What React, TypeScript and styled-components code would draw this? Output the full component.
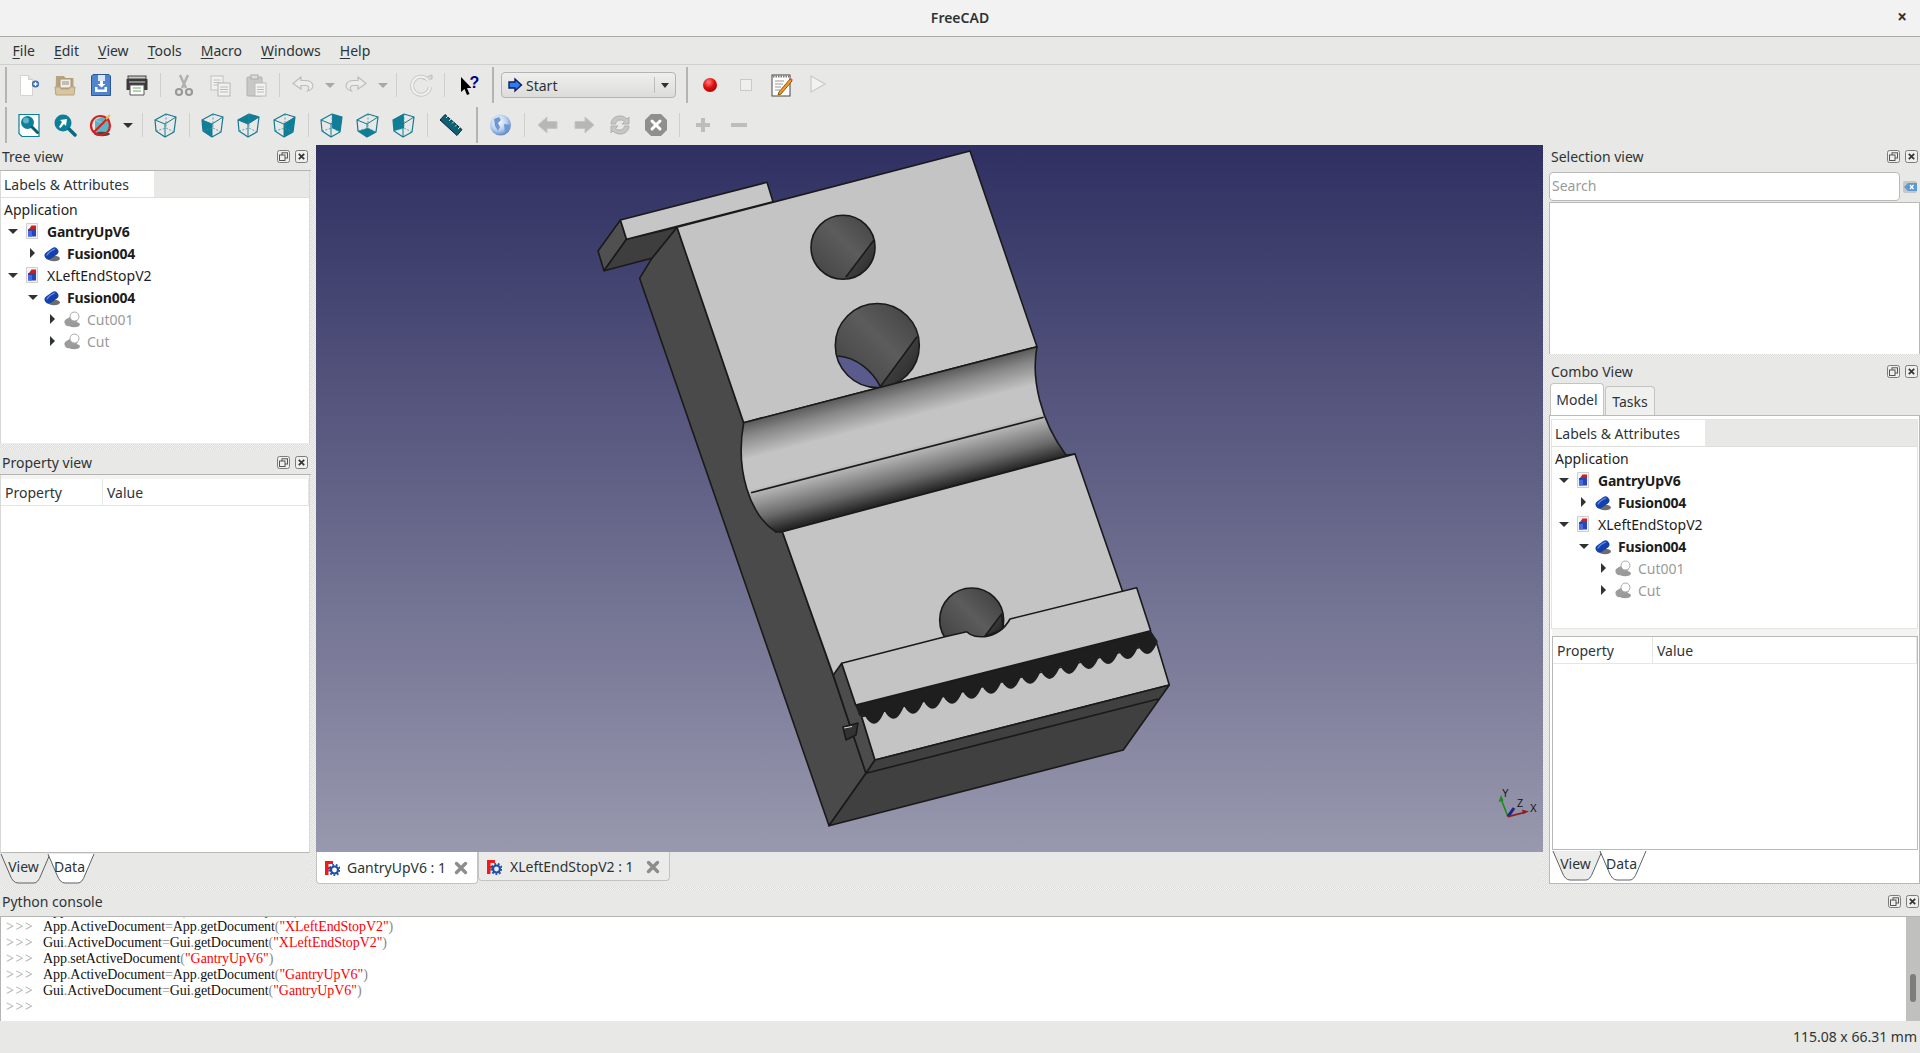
import React from "react";
import styled, { createGlobalStyle } from "styled-components";

const Global = createGlobalStyle`
  html, body { margin: 0; padding: 0; background: #e8e8e7; }
  body { font-family: "Noto Sans", "Open Sans", sans-serif; font-size: 14px; color: #2e3436; }
  * { box-sizing: border-box; }
`;

const Window = styled.div`
  width: 1920px; height: 1053px; display: flex; flex-direction: column; overflow: hidden; background: #e8e8e7;
`;
const TitleBar = styled.div`
  height: 37px; flex: none; display: flex; align-items: center; justify-content: center; position: relative;
  background: #f2f2f2; border-bottom: 1px solid #a9a9a6; font-weight: 600; font-size: 14px; color: #2e3436; padding-bottom: 2px;
`;
const TitleClose = styled.span`
  position: absolute; right: 13px; top: 8px; font-size: 17px; font-weight: 700; color: #2e3436; line-height: 18px;
`;
const MenuBar = styled.div`
  height: 28px; flex: none; display: flex; align-items: center; padding-left: 3px; border-bottom: 1px solid #d0d0ce;
`;
const MenuItem = styled.span`
  padding: 0 9.5px; font-size: 14px; color: #2e3436; u { text-underline-offset: 2px; }
`;
const ToolRow = styled.div`
  height: 40px; flex: none; display: flex; align-items: center; padding-left: 11px; position: relative;
`;
const RowGrip = styled.i`
  position: absolute; left: 5px; top: 2px; bottom: 2px; width: 2px; background: #b4b4b2;
`;
const ToolBtn = styled.span`
  width: 36px; height: 36px; flex: none; display: flex; align-items: center; justify-content: center;
`;
const ToolArrow = styled.span`
  width: ${(p: { $on?: boolean }) => (p.$on ? 18 : 17)}px; height: 36px; flex: none; display: flex; align-items: center; justify-content: center;
  &::after { content: ""; border-left: 5px solid transparent; border-right: 5px solid transparent;
    border-top: 5px solid ${(p: { $on?: boolean }) => (p.$on ? "#2e3436" : "#a8a8a8")}; }
`;
const ToolSep = styled.span`
  width: ${(p: { $w?: number }) => p.$w ?? 11}px; height: 24px; flex: none; position: relative;
  &::after { content: ""; position: absolute; left: 5px; top: 0; bottom: 0; width: 1px; background: #cfcfcd; }
`;
const ToolGrip = styled.span<{ $r: number; $l: number }>`
  width: 2px; height: 36px; flex: none; background: #b4b4b2; margin: 0 ${(p) => p.$r}px 0 ${(p) => p.$l}px;
`;
const Combo = styled.div`
  width: 175px; height: 26px; flex: none; display: flex; align-items: center; border: 1px solid #b4b4b2; border-radius: 4px;
  background: linear-gradient(#efefee, #dcdcda); padding-left: 5px; gap: 3px; font-size: 14px; color: #2e3436; position: relative;
`;
const ComboArrow = styled.span`
  margin-left: auto; width: 21px; height: 16px; border-left: 1px solid #bdbdbb; display: flex; align-items: center; justify-content: center;
  &::after { content: ""; border-left: 4.5px solid transparent; border-right: 4.5px solid transparent; border-top: 5px solid #2e3436; }
`;

const Main = styled.div`
  height: 742px; flex: none; display: flex;
`;
const LeftCol = styled.div`
  width: 311px; flex: none; display: flex; flex-direction: column;
`;
const RightCol = styled.div`
  width: 372px; flex: none; display: flex; flex-direction: column; padding: 0 0 3px 1px;
`;
const CenterCol = styled.div`
  width: 1227px; flex: none; display: flex; flex-direction: column;
`;
const VSplit = styled.div`
  width: 5px; flex: none; background: repeating-conic-gradient(#dcdcda 0 25%, #f3f3f2 0 50%) 0 0 / 2px 2px;
`;
const HSplit = styled.div`
  height: ${(p: { $h?: number }) => p.$h ?? 5}px; flex: none; background: repeating-conic-gradient(#dcdcda 0 25%, #f3f3f2 0 50%) 0 0 / 2px 2px;
`;
const DockHeader = styled.div<{ $plain?: boolean; $low?: boolean; $pr?: number }>`
  height: 26px; flex: none; display: flex; align-items: center; justify-content: space-between;
  padding: ${(p) => (p.$low ? "1px" : "0")} ${(p) => p.$pr ?? 3}px ${(p) => (p.$low ? "0" : "3px")} 2px;
  font-size: 14px; color: #2e3436; border-bottom: 1px solid ${(p) => (p.$plain ? "transparent" : "#b4b4b2")};
`;
const DockBtns = styled.span`
  display: flex; gap: 5px; align-items: center;
`;
const Panel = styled.div<{ $h?: number }>`
  background: #fff; display: flex; flex-direction: column; overflow: hidden; flex: ${(p) => (p.$h ? "none" : "1")};
  height: ${(p) => (p.$h ? `${p.$h}px` : "auto")};
  margin: 0 1px 0 0;
  border-left: 1px solid #d8d8d6; border-right: 1px solid #d8d8d6;
  border-bottom: 1px solid ${(p) => (p.$h ? "#ebebe9" : "#b9b9b7")};
`;
const LabelBar = styled.div`
  height: 27px; flex: none; display: flex; background: #e8e8e7; border-bottom: 1px solid #dededc;
`;
const LabelTab = styled.div`
  width: 153px; background: #fff; padding: 0 3px; display: flex; align-items: center; font-size: 14px; color: #2e3436;
`;
const RootLabel = styled.div`
  height: 22px; padding-left: 3px; display: flex; align-items: center; font-size: 14px; color: #1e1e1e;
`;
const TreeRow = styled.div<{ $depth: number; $bold?: boolean; $dim?: boolean }>`
  height: 22px; display: flex; align-items: center; font-size: 14px;
  padding-left: ${(p) => 5 + p.$depth * 20}px;
  font-weight: ${(p) => (p.$bold ? 700 : 400)}; letter-spacing: ${(p) => (p.$bold ? "-0.2px" : "0")};
  color: ${(p) => (p.$dim ? "#9a9a9a" : "#1c1c1c")};
`;
const TreeArrow = styled.span`
  width: 13px; height: 10px; flex: none; display: flex; align-items: center; justify-content: center;
  &::after { content: ""; ${(p: { $open: boolean }) =>
    p.$open
      ? "border-left:5px solid transparent;border-right:5px solid transparent;border-top:5px solid #2e3436;"
      : "border-top:5px solid transparent;border-bottom:5px solid transparent;border-left:5px solid #2e3436;"} }
`;
const TreeIcon = styled.span`
  width: 20px; height: 18px; flex: none; margin-left: 3px; margin-right: 5px; display: flex; align-items: center; justify-content: center;
`;
const TableHead = styled.div`
  height: 27px; flex: none; display: flex; align-items: center; font-size: 14px; color: #2e3436; border-bottom: 1px solid #e6e6e4;
`;
const HeadCell = styled.div`
  width: ${(p: { $w?: number }) => (p.$w ? `${p.$w}px` : "auto")}; flex: ${(p: { $w?: number }) => (p.$w ? "none" : "1")};
  height: 100%; display: flex; align-items: center; padding-left: 4px; border-right: 1px solid #e6e6e4;
`;
const PropBox = styled.div`
  flex: 1; background: #fff; border: 1px solid #b9b9b7; display: flex; flex-direction: column; min-height: 0;
`;
const SideTabs = styled.div`
  height: ${(p: { $h?: number }) => p.$h ?? 31}px; flex: none; display: flex; padding-left: 0; position: relative;
`;
const SideTab = styled.div`
  width: ${(p: { $w: number }) => p.$w}px; height: 31px; position: relative; display: flex; justify-content: center; padding-top: 4px;
  font-size: 14px; color: #2e3436; line-height: 20px;
  svg { position: absolute; left: 0; top: 0; }
  span { position: relative; }
`;
const Viewport = styled.div`
  flex: 1; min-height: 0; background: linear-gradient(#2f2f62, #9898ae);
  svg { display: block; }
`;
const DocTabs = styled.div`
  height: 35px; flex: none; display: flex; align-items: flex-start;
`;
const DocTab = styled.div<{ $on?: boolean }>`
  height: ${(p) => (p.$on ? 32 : 29)}px; display: flex; align-items: center; padding: ${(p) => (p.$on ? "0" : "1px")} 9px 0 7px; font-size: 14px; color: #2e3436;
  background: ${(p) => (p.$on ? "#fff" : "#ebebea")}; border: 1px solid #c3c3c1; border-top: 0; border-radius: 0 0 4px 4px;
`;
const DocLabel = styled.span<{ $on?: boolean }>`
  margin: 0 ${(p) => (p.$on ? 8 : 12)}px 0 ${(p) => (p.$on ? 7 : 8)}px; white-space: nowrap; color: #2e3436;
`;
const SearchRow = styled.div`
  height: 31px; flex: none; display: flex; align-items: center; gap: 3px;
`;
const SearchBox = styled.div`
  width: 351px; height: 29px; background: #fff; border: 1px solid #b9b9b7; border-radius: 4px; padding: 0 0 2px 2px;
  display: flex; align-items: center; color: #9a9a9a; font-size: 14px;
`;
const SelectionList = styled.div`
  height: 152px; flex: none; background: #fff; border: 1px solid #b9b9b7; border-bottom: 0;
`;
const ComboTabs = styled.div`
  height: 32px; flex: none; display: flex; align-items: flex-end; margin-top: -1px; padding-left: 1px;
`;
const ComboTab = styled.div<{ $w: number; $on?: boolean }>`
  height: ${(p) => (p.$on ? 32 : 29)}px; width: ${(p) => p.$w}px; display: flex; align-items: center; justify-content: center;
  font-size: 14px; color: #2e3436; background: ${(p) => (p.$on ? "#fff" : "#f0f0ef")}; border: 1px solid #c3c3c1; border-bottom: 0; border-radius: 4px 4px 0 0; margin-right: 1px;
`;
const ComboPane = styled.div`
  flex: 1; min-height: 0; background: #fff; border: 1px solid #b9b9b7; padding: 3px 1px 2px 2px; display: flex; flex-direction: column;
`;
const TreeBox = styled.div`
  height: 210px; flex: none; border: 1px solid #e3e3e1; overflow: hidden; margin-left: -1px;
`;
const BoxGap = styled.div`
  height: ${(p: { $h: number }) => p.$h}px; flex: none; background: #f4f4f3;
`;
const ConsoleBar = styled(DockHeader)`
  height: 27px;
`;
const Console = styled.div`
  height: 104px; flex: none; display: flex; background: #fff; border-left: 1px solid #b4b4b2; overflow: hidden;
`;
const ConsoleText = styled.div`
  flex: 1; height: 100%; overflow: hidden; font-family: "Liberation Serif", serif; font-size: 14px; line-height: 16px; padding-left: 5px; color: #111; letter-spacing: -0.07px;
`;
const ConsoleLine = styled.div`
  height: 16px; white-space: nowrap; display: flex; &:first-child { margin-top: -14px; }
`;
const Prompt = styled.span`
  width: 37px; flex: none; color: #9a9a9a; letter-spacing: 1.5px;
`;
const Op = styled.span`
  color: #8a8a8a;
`;
const Str = styled.span`
  color: #f00;
`;
const ScrollTrack = styled.div`
  width: 14px; flex: none; background: #c0c1bf; padding: 57px 4px 0 4px;
`;
const ScrollThumb = styled.div`
  width: 6px; height: 28px; border-radius: 3px; background: #7d7e7c;
`;
const StatusBar = styled.div`
  flex: 1; display: flex; align-items: center; justify-content: flex-end; padding: 0 3px 1px 0; font-size: 14px; color: #2e3436;
`;

/* ---------- icons ---------- */
const S = ({ w = 24, h = 24, children }: { w?: number; h?: number; children: React.ReactNode }) => (
  <svg width={w} height={h} viewBox={`0 0 ${w} ${h}`}>{children}</svg>
);
const NewIcon = () => (
  <S><path d="M3.5 2.5h8l4 4v16h-12z" fill="#fff" stroke="#d3d3d1" /><path d="M11.5 2.5v4h4" fill="#e4e4e4" stroke="#cfcfcf" />
    <circle cx="18.5" cy="11" r="3.6" fill="#3f6fb0" /><path d="M16.5 11h4M18.5 9v4" stroke="#fff" strokeWidth="1.3" /></S>
);
const OpenIcon = () => (
  <S><path d="M3 3h8l1.500 2h8v16h-18z" fill="#b7a37e" /><rect x="7" y="6" width="11" height="9" fill="#f1ede3" stroke="#a89772" /><path d="M9 9h7M9 11h7" stroke="#8f8f8f" />
    <path d="M2 14h5l1 2h8l1-2h5l-1 8H3z" fill="#d8c6a0" stroke="#b7a37e" /></S>
);
const SaveIcon = () => (
  <S><path d="M4 1.500h16l1.500 1.500v19.500h-19V3z" fill="#4f84cf" stroke="#2b5797" /><rect x="9" y="2" width="7" height="6" fill="#d9e6f7" />
    <path d="M11 8h3v3h2.500l-4 3.500-4-3.500H11z" fill="#fff" /><path d="M6 14v5h12v-5h-2.500v2.500H8.500V14z" fill="#fff" /></S>
);
const PrintIcon = () => (
  <S><rect x="3" y="3" width="18" height="3" fill="#c9c9c9" stroke="#444" /><path d="M1.500 6h21v11h-21z" fill="#3a3a3a" /><rect x="4" y="8" width="16" height="2" fill="#888" />
    <path d="M5 12h14v10H5z" fill="#fff" stroke="#555" /><path d="M8 15h8M8 18h8" stroke="#6aa86a" /></S>
);
const CutIcon = () => (
  <S><path d="M8 2l6 13M16 2l-6 13" stroke="#b0b0b0" strokeWidth="2.500" /><circle cx="7" cy="19" r="3" fill="none" stroke="#9a9a9a" strokeWidth="2.200" /><circle cx="17" cy="19" r="3" fill="none" stroke="#9a9a9a" strokeWidth="2.200" /></S>
);
const CopyIcon = () => (
  <S><rect x="3" y="3" width="12" height="14" fill="#f1f1f1" stroke="#c0c0c0" /><path d="M5.500 7h7M5.500 9.500h7M5.500 12h7" stroke="#c0c0c0" />
    <rect x="10" y="10" width="12" height="13" fill="#f1f1f1" stroke="#b6b6b6" /><path d="M12 14h8M12 16.500h8M12 19h8" stroke="#bbb" /></S>
);
const PasteIcon = () => (
  <S><rect x="3" y="4" width="15" height="19" rx="1" fill="#c8c8c8" stroke="#b0b0b0" /><rect x="7" y="2" width="7" height="4" fill="#ddd" stroke="#aaa" />
    <rect x="11" y="10" width="11" height="13" fill="#f3f3f3" stroke="#bbb" /><path d="M13 14h7M13 16.500h7M13 19h7" stroke="#bbb" /></S>
);
const UndoIcon = ({ flip }: { flip?: boolean }) => (
  <S><g transform={flip ? "translate(24 0) scale(-1 1)" : undefined}><path d="M10 4L2 10.500 10 16v-3.500h5c3 0 3.500 3 1.500 5.500C21 17 23 14 21.500 11c-1-2-3.500-3.500-6.500-3.500h-5z" fill="#ececec" stroke="#bdbdbd" strokeWidth="1.200" /></g></S>
);
const RefreshIcon = () => (
  <S><path d="M19 7a9 9 0 1 0 2 7" fill="none" stroke="#c9c9c9" strokeWidth="4" /><path d="M14 6h9V2z" fill="#dedede" stroke="#bbb" /><path d="M19 7a9 9 0 1 0 2 7" fill="none" stroke="#f1f1f1" strokeWidth="2" /></S>
);
const HelpIcon = () => (
  <S><path d="M5 4v15l3.500-3 2.500 6 2.500-1-2.500-6h4.500z" fill="#000" /><text x="13.500" y="15" fontFamily="'Liberation Sans',sans-serif" fontWeight="700" fontSize="16" fill="#00008b">?</text></S>
);
const ArrowIcon = () => (
  <S w={16} h={16}><path d="M8 2l6.500 6L8 14v-3H2V5h6z" fill="#2f7cf0" stroke="#0f1f5f" strokeWidth="1.400" /></S>
);
const RecordIcon = () => (
  <S w={16} h={16}><defs><radialGradient id="rec" cx=".4" cy=".3" r=".8"><stop offset="0" stopColor="#ff8080" /><stop offset=".5" stopColor="#e01010" /><stop offset="1" stopColor="#a00000" /></radialGradient></defs><circle cx="8" cy="8" r="7" fill="url(#rec)" /></S>
);
const StopSqIcon = () => (
  <S w={16} h={16}><rect x="2.500" y="2.500" width="11" height="11" fill="#efefef" stroke="#c9c9c9" /></S>
);
const EditIcon = () => (
  <S><rect x="2" y="2" width="18" height="21" fill="#fff" stroke="#444" /><path d="M3 3.500h16" stroke="#777" strokeDasharray="1.500 1" strokeWidth="2" /><path d="M5 8h9M5 11h8M5 14h6M5 17h5" stroke="#999" />
    <path d="M9 19l-1 3 3-1L22 8l-2-2z" fill="#f59a23" stroke="#8a5a10" /><path d="M20 6l2 2 1-1-2-2z" fill="#e06060" /></S>
);
const PlayIcon = () => (
  <S><path d="M5 3l14 8-14 8z" fill="#f2f2f2" stroke="#c9c9c9" strokeWidth="1.200" /></S>
);
const TEAL = "#0e7f98";
const FitIcon = () => (
  <S><path d="M2 1.500h20v22H5l-3-3z" fill="#fff" stroke={TEAL} strokeWidth="1.200" /><circle cx="10.500" cy="9.500" r="6.500" fill={TEAL} /><circle cx="9" cy="7.500" r="3" fill="#5fb4c8" /><path d="M15 14l5.500 5.500" stroke="#0c5f73" strokeWidth="3" strokeLinecap="round" /></S>
);
const ZoomIcon = () => (
  <S><circle cx="10" cy="10" r="8.500" fill={TEAL} /><path d="M6 14l3-5-2-2 7-1-1 7-2-2-3.500 4z" fill="#fff" /><path d="M16 16l6 6" stroke="#0c6a80" strokeWidth="3.500" strokeLinecap="round" /></S>
);
const NoRenderIcon = () => (
  <S><path d="M6 7l9-4 6 3v12l-9 4-6-4z" fill="#5ab5c4" /><path d="M6 7l7 3 8-4" fill="none" stroke="#8fd0d8" /><ellipse cx="13" cy="21" rx="8" ry="2.200" fill="#444" />
    <circle cx="11.500" cy="12.500" r="9.500" fill="none" stroke="#d62020" strokeWidth="2.200" /><path d="M5 19L19 5" stroke="#d62020" strokeWidth="2.200" /><path d="M17 6l4-4" stroke="#e8c030" strokeWidth="2" /></S>
);
const CUBE = {
  tl: "1,7", t: "12,1", tr: "22,4", br: "20,19", b: "11,24", bl: "2,18", f: "11,11", k: "12,15",
};
const faces: Record<string, string> = {
  front: `${CUBE.tl} ${CUBE.f} ${CUBE.b} ${CUBE.bl}`,
  top: `${CUBE.tl} ${CUBE.t} ${CUBE.tr} ${CUBE.f}`,
  right: `${CUBE.f} ${CUBE.tr} ${CUBE.br} ${CUBE.b}`,
  rear: `${CUBE.t} ${CUBE.tr} ${CUBE.br} ${CUBE.k}`,
  bottom: `${CUBE.bl} ${CUBE.k} ${CUBE.br} ${CUBE.b}`,
  left: `${CUBE.tl} ${CUBE.t} ${CUBE.k} ${CUBE.bl}`,
};
const CubeIcon = ({ face }: { face?: string }) => (
  <svg width="24" height="25" viewBox="0 0 24 25">
    {face && <polygon points={faces[face]} fill="#0f7f99" />}
    <polygon points={`${CUBE.tl} ${CUBE.t} ${CUBE.tr} ${CUBE.br} ${CUBE.b} ${CUBE.bl}`} fill="none" stroke="#17788f" strokeWidth="1.200" strokeLinejoin="round" />
    <path d={`M1 7L11 11 22 4M11 11V24`} fill="none" stroke="#17788f" strokeWidth="1" />
    <path d={`M12 1V15M2 18L12 15 20 19`} fill="none" stroke="#3a92a6" strokeWidth=".8" strokeDasharray="2 1.500" />
  </svg>
);
const MeasureIcon = () => (
  <S><path d="M6 1.500L23 16.500 18 22.500 1 7z" fill="#0f5f75" stroke="#123" strokeWidth="1" /><path d="M7 5l2-2M10 8l2-2M13 10.500l2-2M16 13.500l2-2M19 16l2-2" stroke="#9fd" strokeWidth="1" /></S>
);
const WebIcon = () => (
  <S><defs><radialGradient id="globe" cx=".4" cy=".35" r=".75"><stop offset="0" stopColor="#fff" /><stop offset=".55" stopColor="#b5cdee" /><stop offset="1" stopColor="#3f6fb8" /></radialGradient></defs>
    <circle cx="11.500" cy="12" r="10.500" fill="url(#globe)" /><path d="M5 6l5-2 2 3-3 3 2 4-2 4-3-5zM15 11l6 1-2 6-3 2z" fill="#6f98d0" /></S>
);
const NavIcon = ({ flip }: { flip?: boolean }) => (
  <S><path d={flip ? "M13 4l9 8-9 8v-4.500H3v-7h10z" : "M11 4l-9 8 9 8v-4.500h10v-7H11z"} fill="#b7b7b7" stroke="#c6c6c6" /></S>
);
const ReloadIcon = () => (
  <S><path d="M3 11C3 6 7 3 12 3c3 0 5 1 7 3l2-2v7h-7l2.500-2.500C15 7 13.500 7 12 7c-3 0-4 2-4.500 4z" fill="#c6c6c6" stroke="#b0b0b0" /><path d="M21 13c0 5-4 8-9 8-3 0-5-1-7-3l-2 2v-7h7l-2.500 2.500C9 17 10.500 17 12 17c3 0 4-2 4.500-4z" fill="#c6c6c6" stroke="#b0b0b0" /></S>
);
const HaltIcon = () => (
  <S><polygon points="7,1 17,1 23,7 23,17 17,23 7,23 1,17 1,7" fill="#8f8f8f" /><path d="M8 8l8 8M16 8l-8 8" stroke="#fff" strokeWidth="3" strokeLinecap="round" /></S>
);
const PlusIcon = () => (
  <S w={18} h={18}><path d="M9 2v14M2 9h14" stroke="#bdbdbd" strokeWidth="4" /></S>
);
const MinusIcon = () => (
  <S w={18} h={18}><path d="M1 9h16" stroke="#bdbdbd" strokeWidth="4" /></S>
);
const FloatBtn = () => (
  <S w={13} h={13}><rect x=".5" y=".5" width="12" height="12" rx="2" fill="#efefee" stroke="#7c7c7c" /><rect x="5" y="2.800" width="5.500" height="5.200" fill="none" stroke="#555" /><rect x="2.500" y="5" width="5.500" height="5.500" fill="#efefee" stroke="#555" /></S>
);
const CloseBtn = () => (
  <S w={13} h={13}><rect x=".5" y=".5" width="12" height="12" rx="2" fill="#efefee" stroke="#7c7c7c" /><path d="M3.800 3.800l5.400 5.400M9.200 3.800L3.800 9.200" stroke="#333" strokeWidth="1.700" /></S>
);
const DockButtons = () => (<DockBtns><FloatBtn /><CloseBtn /></DockBtns>);
const DocIcon = () => (
  <S w={16} h={16}><path d="M2.500 .5h11v15h-11z" fill="#f4f4f4" stroke="#cfcfcf" /><path d="M5 6l3-4 3 3v2z" fill="#cc1f1f" /><rect x="9" y="2.500" width="3" height="4" fill="#cc2020" /><rect x="4" y="6" width="8" height="7.500" fill="#2647b5" /><rect x="4" y="8" width="4" height="5.500" fill="#4a6ae0" /></S>
);
const BlobIcon = ({ dim }: { dim?: boolean }) => (
  <S w={18} h={17}>
    <ellipse cx="11" cy="13.500" rx="6" ry="2.800" fill={dim ? "#777" : "#3c3c3c"} opacity=".75" />
    {dim ? (
      <>
        <rect x="1" y="6" width="14" height="7.500" rx="3.700" transform="rotate(-30 8 9.500)" fill="#9c9c9c" />
        <circle cx="11.500" cy="5.500" r="4.500" fill="#fff" stroke="#aaa" />
      </>
    ) : (
      <>
        <rect x="1" y="4.500" width="15" height="8" rx="4" transform="rotate(-35 8.500 8.500)" fill="#1440ac" />
        <path d="M4 10c1.500-2.500 4-4.500 7.500-5.800" stroke="#5f88e6" strokeWidth="1.400" fill="none" strokeLinecap="round" />
      </>
    )}
  </S>
);
const TabLogo = () => (
  <S w={16} h={16}><path d="M1 1h8v3H4.500v3H8v2.500H4.500V15H1z" fill="#ee1c1c" /><circle cx="10.500" cy="10" r="3.500" fill="none" stroke="#1b4fa8" strokeWidth="2.200" /><circle cx="10.500" cy="10" r="5.200" fill="none" stroke="#1b4fa8" strokeWidth="1.800" strokeDasharray="1.800 1.800" /></S>
);
const TabClose = () => (
  <S w={14} h={14}><path d="M2.500 2.500l9 9M11.500 2.500l-9 9" stroke="#8d8d8d" strokeWidth="3.400" strokeLinecap="round" /></S>
);
const ClearIcon = () => (
  <S w={14} h={14}><rect x="0" y="1" width="14" height="12" rx="2" fill="#c7c7c5" /><path d="M1 7l4-4h9v8H5z" fill="#5a9bd6" /><path d="M7 5l3.500 4M10.500 5L7 9" stroke="#fff" strokeWidth="1.300" /></S>
);

const TabShape = ({ w, on }: { w: number; on?: boolean }) => (
  <svg width={w + 10} height="31" viewBox={`0 0 ${w + 10} 31`}>
    <path d={`M1 1L10 22Q13 30 18 30H${w - 14}Q${w - 10} 30 ${w - 7} 22L${w + 2} 1`} fill={on ? "#fff" : "#ececeb"} stroke="#5c6263" strokeWidth="1" />
  </svg>
);

/* ---------- tree ---------- */
type Node = { label: string; depth: number; open: boolean; bold?: boolean; dim?: boolean; kind: "doc" | "fus" | "cut" };
const NODES: Node[] = [
  { label: "GantryUpV6", depth: 0, open: true, bold: true, kind: "doc" },
  { label: "Fusion004", depth: 1, open: false, bold: true, kind: "fus" },
  { label: "XLeftEndStopV2", depth: 0, open: true, kind: "doc" },
  { label: "Fusion004", depth: 1, open: true, bold: true, kind: "fus" },
  { label: "Cut001", depth: 2, open: false, dim: true, kind: "cut" },
  { label: "Cut", depth: 2, open: false, dim: true, kind: "cut" },
];
const TreeContent = () => (
  <>
    <LabelBar><LabelTab>Labels &amp; Attributes</LabelTab></LabelBar>
    <RootLabel>Application</RootLabel>
    {NODES.map((n, i) => (
      <TreeRow key={i} $depth={n.depth} $bold={n.bold} $dim={n.dim}>
        <TreeArrow $open={n.open} />
        <TreeIcon>{n.kind === "doc" ? <DocIcon /> : <BlobIcon dim={n.kind === "cut"} />}</TreeIcon>
        {n.label}
      </TreeRow>
    ))}
  </>
);
const PropHead = ({ w }: { w: number }) => (
  <TableHead><HeadCell $w={w}>Property</HeadCell><HeadCell>Value</HeadCell></TableHead>
);
const ViewDataTabs = () => (
  <>
    <SideTab $w={47}><TabShape w={48} on={false} /><span>View</span></SideTab>
    <SideTab $w={45}><TabShape w={45} on /><span>Data</span></SideTab>
  </>
);

/* ---------- 3D part ---------- */
const toothPath = () => {
  const peak = (i: number) => ({ x: 865 + i * 19.52, y: 715.9 - i * 4.98 });
  let d = "M855.700 705L859 715.500 " + `${peak(0).x} ${peak(0).y}`;
  for (let i = 0; i < 15; i++) {
    const a = peak(i);
    const b = peak(i + 1);
    d += `C${a.x + 7} ${a.y + 12} ${b.x - 6} ${b.y + 15} ${b.x} ${b.y}`;
  }
  return d + "L1150.700 630.700Z";
};
const Part = () => {
  const line = { stroke: "#1a1a1a", strokeWidth: 1.6, strokeLinejoin: "round" as const };
  return (
    <svg width="1227" height="707" viewBox="316 145 1227 707">
      <defs>
        <linearGradient id="cyl" gradientUnits="userSpaceOnUse" x1="743.700" y1="422.700" x2="772" y2="532">
          <stop offset="0" stopColor="#5a5a5a" /><stop offset=".12" stopColor="#888" /><stop offset=".32" stopColor="#c4c4c4" />
          <stop offset=".58" stopColor="#c4c4c4" /><stop offset=".85" stopColor="#6a6a6a" /><stop offset="1" stopColor="#262626" />
        </linearGradient>
        <linearGradient id="hole" x1="0" y1="1" x2="1" y2="0">
          <stop offset="0" stopColor="#3c3c3c" /><stop offset=".55" stopColor="#5c5c5c" /><stop offset="1" stopColor="#3a3a3a" />
        </linearGradient>
        <linearGradient id="holeR" x1="0" y1="0" x2="1" y2="1">
          <stop offset="0" stopColor="#555" /><stop offset="1" stopColor="#1e1e1e" />
        </linearGradient>
        <clipPath id="h1"><circle cx="843" cy="247.300" r="32" /></clipPath>
        <clipPath id="h2"><circle cx="877.300" cy="345.500" r="42" /></clipPath>
      </defs>

      {/* dark side wall */}
      <polygon points="677,227.300 651.800,258.300 639.600,278.300 829,825.700 866,773.300 833,675 782.400,531.700 775.500,531.700 743.700,422.700" fill="#4a4a4a" {...line} />
      {/* tab */}
      <polygon points="620.400,220 598,251 604,270.700 626.500,239.300" fill="#505050" {...line} />
      <polygon points="626.500,239.300 604,270.700 651.800,258.300 677,227.300" fill="#3e3e3e" {...line} />
      <polygon points="620.400,220 767,182.300 773,201.700 626.500,239.300" fill="#c6c6c6" {...line} />
      {/* upper plate */}
      <polygon points="970,151 1037,346.700 743.700,422.700 677,227.300" fill="#c4c4c4" {...line} />

      {/* holes */}
      <g clipPath="url(#h1)">
        <rect x="805" y="210" width="80" height="80" fill="url(#hole)" />
        <polygon points="874,240 880,240 880,285 845.700,277.300" fill="url(#holeR)" />
      </g>
      <circle cx="843" cy="247.300" r="32" fill="none" {...line} />
      <path d="M874 240L845.700 277.300" {...line} />
      <g clipPath="url(#h2)">
        <rect x="830" y="298" width="95" height="95" fill="url(#hole)" />
        <polygon points="917,336.700 880.400,386.500 925,392 925,336" fill="url(#holeR)" />
        <path d="M837.600 356C857 357 873 372 880.400 386.700L830 400Z" fill="#5a5a8c" />
      </g>
      <circle cx="877.300" cy="345.500" r="42" fill="none" {...line} />
      <path d="M917 336.700L880.400 386.500M837.600 356C857 357 873 372 880.400 386.700" fill="none" {...line} />

      {/* cylinder cut */}
      <path d="M743.700 422.700L1037 346.700C1031 378 1040 420 1066 455L1075 454 782.400 531.700 775.500 531.700C750 515 735 470 743.700 422.700Z" fill="url(#cyl)" {...line} />
      <path d="M751 492.700L1043.700 417.300" {...line} />

      {/* lower plate */}
      <polygon points="782.400,531.700 1075,454 1122.700,591.700 1136,600 1150,640 870,725 833.300,675" fill="#c4c4c4" />
      <path d="M782.400 531.700L1075 454 1122.700 591.700M782.400 531.700L833.300 675" fill="none" {...line} />
      {/* third hole */}
      <circle cx="971.700" cy="620" r="32" fill="url(#hole)" {...line} />
      <path d="M1001.700 614L985 636 1003 630Z" fill="url(#holeR)" {...line} />

      {/* raised strip side */}
      <polygon points="833.300,675 841.700,663.300 855.700,705 861.700,716.700 875,760 866,773.300" fill="#4c4c4c" {...line} />
      {/* lower strip */}
      <polygon points="861.700,716.700 1156.700,643.300 1169.300,685 875,760" fill="#c4c4c4" {...line} />
      {/* teeth */}
      <path d={toothPath()} fill="#1e1e1e" />
      {/* strip top */}
      <path d="M841.700 663.300L945 636.700 966.700 631.700C972 637 978 637 985 636.700 994 636 1004 630 1010 619L1136.700 587.700 1150.700 630.700 855.700 705Z" fill="#c4c4c4" {...line} />
      <polygon points="843,727 858,723 856,735 846,740" fill="#333" {...line} />
      <path d="M844 728L852 726.500" stroke="#ddd" strokeWidth="1" />

      {/* front wall */}
      <polygon points="866,773.300 875,760 1169.300,685 1123.300,750 829,825.700" fill="#404040" {...line} />
      <path d="M866 773.300L1158 699" {...line} />

      {/* axis */}
      <path d="M1508 816.700L1501 799" stroke="#1c8a1c" strokeWidth="1.600" />
      <path d="M1501 795l-2.500 7 5-1.500z" fill="#1c8a1c" />
      <path d="M1508 816.700L1514 808" stroke="#22228a" strokeWidth="3" />
      <path d="M1508 816.700L1526 812" stroke="#8a2222" strokeWidth="1.800" />
      <path d="M1529 811.500l-7-2 1 4.500z" fill="#8a2222" />
      <g fontFamily="'Liberation Sans',sans-serif" fontSize="10" fill="#111">
        <text x="1502" y="797">Y</text><text x="1517" y="807">Z</text><text x="1530" y="812">X</text>
      </g>
    </svg>
  );
};

const Code = ({ a, s }: { a: string; s: string }) => {
  const parts = a.split(/([.=])/);
  return (
    <ConsoleLine>
      <Prompt>&gt;&gt;&gt;</Prompt>
      <span>
        {parts.map((p, i) => (p === "." || p === "=" ? <Op key={i}>{p}</Op> : <React.Fragment key={i}>{p}</React.Fragment>))}
        {s && <Op>(</Op>}{s && <Str>"{s}"</Str>}{s && <Op>)</Op>}
      </span>
    </ConsoleLine>
  );
};

export default function App() {
  return (
    <Window>
      <Global />
      <TitleBar>FreeCAD<TitleClose>×</TitleClose></TitleBar>
      <MenuBar>
        {["File", "Edit", "View", "Tools", "Macro", "Windows", "Help"].map((m) => (
          <MenuItem key={m}><u>{m[0]}</u>{m.slice(1)}</MenuItem>
        ))}
      </MenuBar>
      <ToolRow>
        <RowGrip />
        <ToolBtn><NewIcon /></ToolBtn><ToolBtn><OpenIcon /></ToolBtn><ToolBtn><SaveIcon /></ToolBtn><ToolBtn><PrintIcon /></ToolBtn>
        <ToolSep />
        <ToolBtn><CutIcon /></ToolBtn><ToolBtn><CopyIcon /></ToolBtn><ToolBtn><PasteIcon /></ToolBtn>
        <ToolSep />
        <ToolBtn><UndoIcon /></ToolBtn><ToolArrow /><ToolBtn><UndoIcon flip /></ToolBtn><ToolArrow />
        <ToolSep $w={12} />
        <ToolBtn><RefreshIcon /></ToolBtn>
        <ToolSep />
        <ToolBtn><HelpIcon /></ToolBtn>
        <ToolGrip $l={6} $r={7} />
        <Combo><ArrowIcon />Start<ComboArrow /></Combo>
        <ToolGrip $l={10} $r={4} />
        <ToolBtn><RecordIcon /></ToolBtn><ToolBtn><StopSqIcon /></ToolBtn><ToolBtn><EditIcon /></ToolBtn><ToolBtn><PlayIcon /></ToolBtn>
      </ToolRow>
      <ToolRow>
        <RowGrip />
        <ToolBtn><FitIcon /></ToolBtn><ToolBtn><ZoomIcon /></ToolBtn><ToolBtn><NoRenderIcon /></ToolBtn><ToolArrow $on />
        <ToolSep />
        <ToolBtn><CubeIcon /></ToolBtn>
        <ToolSep />
        <ToolBtn><CubeIcon face="front" /></ToolBtn><ToolBtn><CubeIcon face="top" /></ToolBtn><ToolBtn><CubeIcon face="right" /></ToolBtn>
        <ToolSep />
        <ToolBtn><CubeIcon face="rear" /></ToolBtn><ToolBtn><CubeIcon face="bottom" /></ToolBtn><ToolBtn><CubeIcon face="left" /></ToolBtn>
        <ToolSep />
        <ToolBtn><MeasureIcon /></ToolBtn>
        <ToolGrip $l={7} $r={5} />
        <ToolBtn><WebIcon /></ToolBtn>
        <ToolSep />
        <ToolBtn><NavIcon /></ToolBtn><ToolBtn><NavIcon flip /></ToolBtn><ToolBtn><ReloadIcon /></ToolBtn><ToolBtn><HaltIcon /></ToolBtn>
        <ToolSep />
        <ToolBtn><PlusIcon /></ToolBtn><ToolBtn><MinusIcon /></ToolBtn>
      </ToolRow>
      <Main>
        <LeftCol>
          <DockHeader>Tree view<DockButtons /></DockHeader>
          <Panel $h={273}><TreeContent /></Panel>
          <HSplit />
          <DockHeader $low>Property view<DockButtons /></DockHeader>
          <Panel><BoxGap $h={4} /><PropHead w={102} /></Panel>
          <SideTabs $h={34}><ViewDataTabs /></SideTabs>
        </LeftCol>
        <VSplit />
        <CenterCol>
          <Viewport><Part /></Viewport>
          <DocTabs>
            <DocTab $on><TabLogo /><DocLabel $on>GantryUpV6 : 1</DocLabel><TabClose /></DocTab>
            <DocTab><TabLogo /><DocLabel>XLeftEndStopV2 : 1</DocLabel><TabClose /></DocTab>
          </DocTabs>
        </CenterCol>
        <VSplit />
        <RightCol>
          <DockHeader $plain $pr={2}>Selection view<DockButtons /></DockHeader>
          <SearchRow><SearchBox>Search</SearchBox><ClearIcon /></SearchRow>
          <SelectionList />
          <HSplit $h={4} />
          <DockHeader $plain $low $pr={2}>Combo View<DockButtons /></DockHeader>
          <ComboTabs><ComboTab $w={54} $on>Model</ComboTab><ComboTab $w={50}>Tasks</ComboTab></ComboTabs>
          <ComboPane>
            <TreeBox><TreeContent /></TreeBox>
            <BoxGap $h={7} />
            <PropBox><PropHead w={100} /></PropBox>
            <SideTabs><ViewDataTabs /></SideTabs>
          </ComboPane>
        </RightCol>
      </Main>
      <HSplit $h={3} />
      <ConsoleBar $pr={1}>Python console<DockButtons /></ConsoleBar>
      <Console>
        <ConsoleText>
          <Code a="App.setActiveDocument" s="XLeftEndStopV2" />
          <Code a="App.ActiveDocument=App.getDocument" s="XLeftEndStopV2" />
          <Code a="Gui.ActiveDocument=Gui.getDocument" s="XLeftEndStopV2" />
          <Code a="App.setActiveDocument" s="GantryUpV6" />
          <Code a="App.ActiveDocument=App.getDocument" s="GantryUpV6" />
          <Code a="Gui.ActiveDocument=Gui.getDocument" s="GantryUpV6" />
          <Code a="" s="" />
        </ConsoleText>
        <ScrollTrack><ScrollThumb /></ScrollTrack>
      </Console>
      <StatusBar>115.08 x 66.31 mm</StatusBar>
    </Window>
  );
}
